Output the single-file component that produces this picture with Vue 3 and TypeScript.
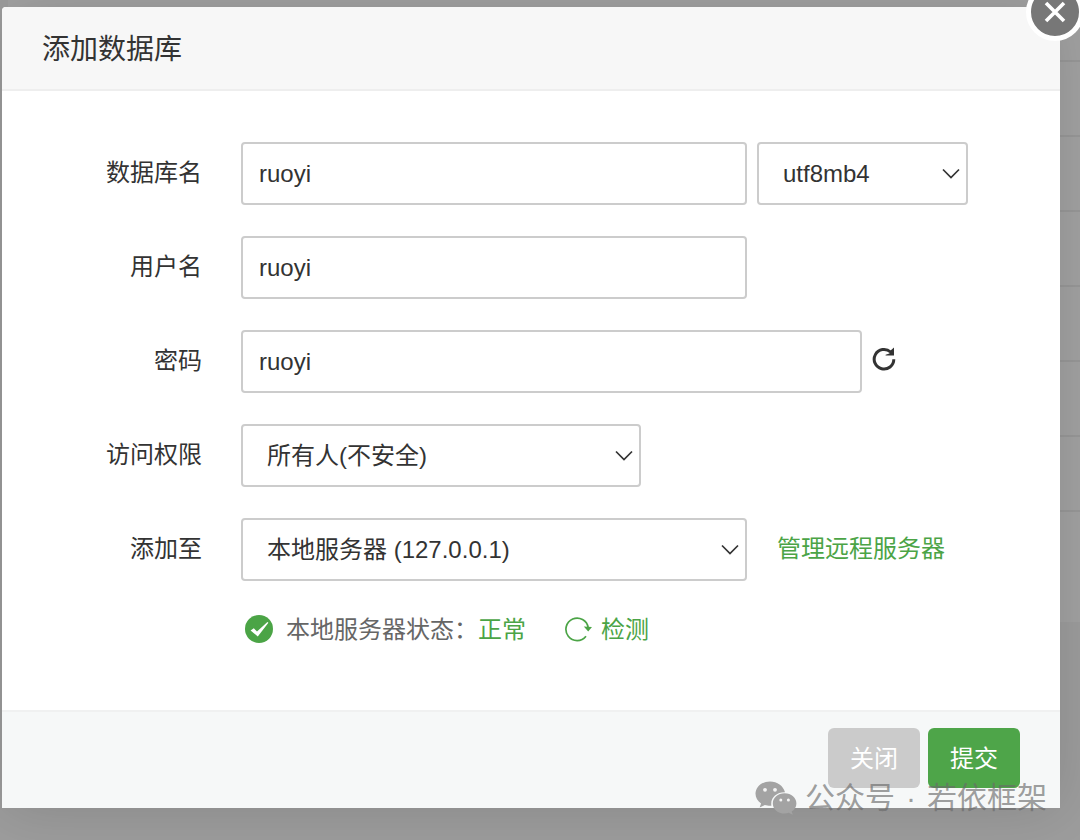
<script setup lang="ts">
import { ref } from 'vue'

const dbName = ref('ruoyi')
const charset = ref('utf8mb4')
const userName = ref('ruoyi')
const password = ref('ruoyi')
const access = ref('all')
const server = ref('local')

const charsets = ['utf8mb4', 'utf8', 'gbk', 'big5']
</script>

<template>
  <div class="page">
    <div class="backdrop" aria-hidden="true">
      <div class="list">
        <div v-for="n in 8" :key="n" class="list-row"></div>
      </div>
    </div>

    <form class="dialog" role="dialog" aria-labelledby="dialog-title" @submit.prevent>
      <header class="head">
        <h1 id="dialog-title">添加数据库</h1>
        <button type="button" class="dismiss" aria-label="关闭窗口">
          <svg viewBox="0 0 24 24" width="24" height="24">
            <path d="M3 3 21 21M21 3 3 21" fill="none" stroke="#fff" stroke-width="3.6" />
          </svg>
        </button>
      </header>

      <div class="body">
        <div class="row">
          <label class="name" for="db-name">数据库名</label>
          <div class="fields">
            <input id="db-name" v-model="dbName" class="control medium" type="text" />
            <div class="pick small">
              <select v-model="charset" class="control" aria-label="字符集">
                <option v-for="c in charsets" :key="c" :value="c">{{ c }}</option>
              </select>
              <svg class="chevron" viewBox="0 0 18 12" width="18" height="12">
                <path d="M1 1.5 9 9.5 17 1.5" fill="none" stroke="#333" stroke-width="1.7" />
              </svg>
            </div>
          </div>
        </div>

        <div class="row">
          <label class="name" for="user-name">用户名</label>
          <div class="fields">
            <input id="user-name" v-model="userName" class="control medium" type="text" />
          </div>
        </div>

        <div class="row">
          <label class="name" for="password">密码</label>
          <div class="fields">
            <input id="password" v-model="password" class="control wide" type="text" />
            <button type="button" class="plain" aria-label="随机密码">
              <svg viewBox="0 0 24 24" width="24" height="24">
                <path d="M18.6 5A9.8 9.8 0 1 0 21.8 12.2" fill="none" stroke="#333" stroke-width="3" />
                <path d="M22 0.4V8.6H13.6V7.8L17.4 6.4 18 4Z" fill="#333" />
              </svg>
            </button>
          </div>
        </div>

        <div class="row">
          <label class="name" for="access">访问权限</label>
          <div class="fields">
            <div class="pick narrow">
              <select id="access" v-model="access" class="control">
                <option value="all">所有人(不安全)</option>
                <option value="local">本地服务器</option>
              </select>
              <svg class="chevron" viewBox="0 0 18 12" width="18" height="12">
                <path d="M1 1.5 9 9.5 17 1.5" fill="none" stroke="#333" stroke-width="1.7" />
              </svg>
            </div>
          </div>
        </div>

        <div class="row">
          <label class="name" for="server">添加至</label>
          <div class="fields">
            <div class="pick medium">
              <select id="server" v-model="server" class="control">
                <option value="local">本地服务器 (127.0.0.1)</option>
              </select>
              <svg class="chevron" viewBox="0 0 18 12" width="18" height="12">
                <path d="M1 1.5 9 9.5 17 1.5" fill="none" stroke="#333" stroke-width="1.7" />
              </svg>
            </div>
            <a class="manage" href="#">管理远程服务器</a>
          </div>
        </div>

        <div class="status">
          <svg class="ok" viewBox="0 0 28 28" width="28" height="28">
            <circle cx="14" cy="14" r="14" fill="#4ba446" />
            <path d="M5.600 15.400 8.800 13.200 12 16.400 22.400 7 23.400 7.800 12.800 21.600Z" fill="#fff" />
          </svg>
          <span class="text">本地服务器状态：</span>
          <span class="text good">正常</span>
          <button type="button" class="check">
            <svg viewBox="0 0 28 26" width="28" height="26">
              <path d="M22 20.200A11.200 11.200 0 1 1 24.200 11.600" fill="none" stroke="#4ba446" stroke-width="1.700" />
              <path d="M19.800 10.600 28 11 24.200 15.600Z" fill="#4ba446" />
            </svg>
            <span class="text">检测</span>
          </button>
        </div>
      </div>

      <footer class="foot">
        <button type="button" class="btn cancel">关闭</button>
        <button type="submit" class="btn submit">提交</button>
      </footer>
    </form>

    <div class="credit">
      <svg viewBox="0 0 42 34" width="42" height="34">
        <path
          d="M15 0.5C6.8 0.5 0.5 6 0.5 12.8c0 4 2.2 7.3 5.6 9.6L4.6 26.6 9.8 24c1.7.5 3.4.8 5.6.8h1C15 17 21.500 11 30 11.300 28.400 4.900 22.200.5 15 .5Z"
          fill="#a3a3a3"
        />
        <path
          d="M29.600 12.300c-6.700 0-11.800 4.500-11.800 10.100s5.100 10.100 11.800 10.100c1.500 0 2.900-.3 4.200-.7l4 2-1.100-3.400c2.900-1.900 4.700-4.700 4.700-8 0-5.600-5.100-10.100-11.800-10.100Z"
          fill="#a3a3a3"
        />
        <g fill="#f4f4f4">
          <circle cx="10" cy="8.800" r="1.900" />
          <circle cx="20" cy="8.800" r="1.900" />
          <circle cx="25.800" cy="19" r="1.500" />
          <circle cx="33.400" cy="19" r="1.500" />
        </g>
      </svg>
      <span class="account"><span>公众号</span><span>·</span><span>若依框架</span></span>
    </div>
  </div>
</template>

<style>
body {
  margin: 0;
}
</style>

<style scoped>
.page {
  display: grid;
  position: relative;
  min-height: 100vh;
  overflow: hidden;
  background: #9d9d9d;
  color: #333;
  font-family: 'Liberation Sans', 'Noto Sans CJK SC', sans-serif;
  font-size: 24px;
}

.page * {
  box-sizing: border-box;
}

.backdrop,
.dialog {
  grid-area: 1 / 1;
}

.list {
  height: 622px;
  margin-left: 8px;
  background: #a2a2a2;
}

.list-row {
  height: 75px;
  border-bottom: 2px solid #989898;
}

.list-row:first-child {
  height: 62px;
}

.list-row:last-child {
  border-bottom: 0;
}

.dialog {
  position: relative;
  align-self: start;
  margin: 7px 20px 32px 2px;
  border-radius: 4px 4px 0 0;
  background: #fff;
  box-shadow: 0 2px 60px rgba(0, 0, 0, 0.14);
}

.head {
  display: flex;
  align-items: center;
  height: 84px;
  padding: 4px 40px 0;
  border-bottom: 2px solid #eee;
  border-radius: 4px 4px 0 0;
  background: #f7f7f7;
}

h1 {
  margin: 0;
  font-size: 28px;
  font-weight: 400;
  line-height: 40px;
}

button {
  padding: 0;
  border: 0;
  background: none;
  color: inherit;
  font: inherit;
  cursor: pointer;
}

.dismiss {
  display: flex;
  position: absolute;
  top: -24px;
  right: -24px;
  align-items: center;
  justify-content: center;
  width: 58px;
  height: 58px;
  border: 5px solid #fff;
  border-radius: 50%;
  background: #777;
}

.body {
  display: flex;
  flex-direction: column;
  gap: 31px;
  padding: 51px 40px 64px;
}

.row {
  display: grid;
  grid-template-columns: 160px 1fr;
  column-gap: 39px;
  align-items: center;
}

.name,
.manage,
.plain {
  padding-bottom: 6px;
}

.name {
  text-align: right;
}

.fields {
  display: flex;
  align-items: center;
  gap: 10px;
  min-width: 0;
}

.control {
  height: 63px;
  min-width: 0;
  padding: 0 16px;
  border: 2px solid #ccc;
  border-radius: 4px;
  background: #fff;
  color: #333;
  font: inherit;
  outline: 0;
}

.pick {
  position: relative;
  min-width: 0;
}

.pick .control {
  display: block;
  width: 100%;
  padding: 0 36px 0 24px;
  appearance: none;
}

.chevron {
  position: absolute;
  top: 26px;
  right: 8px;
  pointer-events: none;
}

.small {
  width: 211px;
}

.narrow {
  width: 400px;
}

.medium {
  width: 506px;
}

.wide {
  width: 621px;
}

.plain,
.plain svg {
  display: block;
}

.manage {
  margin-left: 20px;
  color: #4ba446;
  text-decoration: none;
  white-space: nowrap;
}

.status {
  display: flex;
  align-items: center;
  height: 34px;
  padding-left: 203px;
  color: #666;
  white-space: nowrap;
}

.ok {
  margin-right: 13px;
}

.text {
  padding-bottom: 4px;
}

.good {
  color: #4ba446;
}

.check {
  display: flex;
  align-items: center;
  gap: 9px;
  margin-left: 38px;
  color: #4ba446;
}

.foot {
  display: flex;
  justify-content: flex-end;
  gap: 8px;
  padding: 16px 40px 20px;
  border-top: 2px solid #f0f1f1;
  background: #f6f8f8;
}

.btn {
  width: 92px;
  height: 60px;
  padding-bottom: 4px;
  border-radius: 6px;
  color: #fff;
}

.cancel {
  background: #cbcbcb;
}

.submit {
  background: #4ea549;
}

.credit {
  display: flex;
  position: absolute;
  right: 33px;
  bottom: 20px;
  align-items: center;
  gap: 8px;
  color: rgba(105, 105, 105, 0.65);
  font-size: 30px;
  line-height: 44px;
  white-space: nowrap;
  pointer-events: none;
}

.account {
  display: flex;
  gap: 11px;
}
</style>
